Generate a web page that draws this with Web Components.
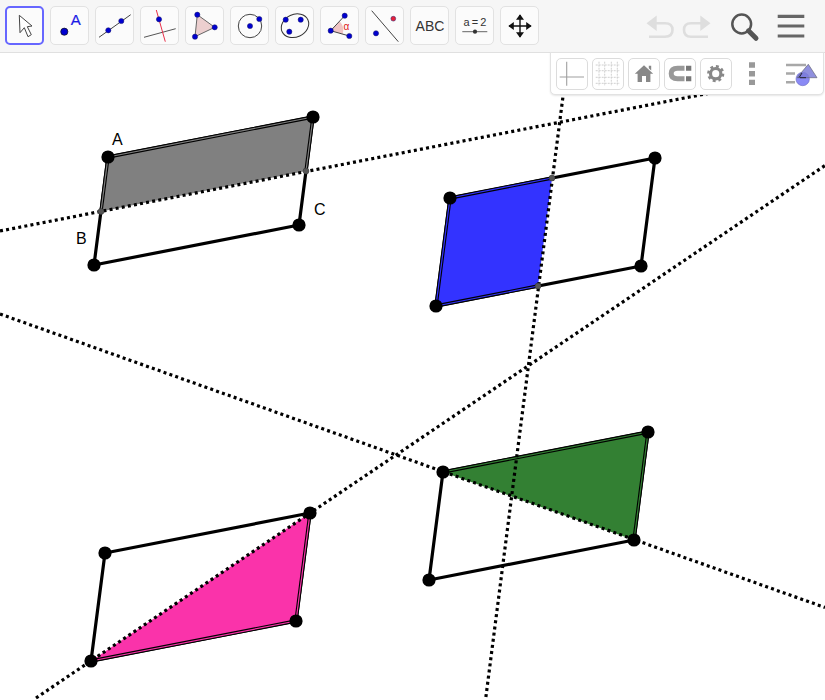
<!DOCTYPE html>
<html lang="en"><head><meta charset="utf-8"><title>GeoGebra</title>
<style>html,body{margin:0;padding:0;background:#fff}body{font-family:"Liberation Sans",Arial,sans-serif}</style></head>
<body><ggb-app></ggb-app>
<script>
const B='#0000d0';
const pt=(x,y,r=2.6,f=B)=>`<circle cx="${x}" cy="${y}" r="${r}" fill="${f}" stroke="#1a1a66" stroke-width=".5"/>`;
const TOOLS={
 move:`<path d="M14.3 9.3L15 26.7 19.3 21.7 23 30.7 26.3 28.7 22.3 20.7 27 20Z" fill="#fff" stroke="#444" stroke-width="1"/>`,
 point:`<circle cx="14.3" cy="25.7" r="3.6" fill="${B}" stroke="#111" stroke-width=".7"/><text x="25.7" y="19.3" text-anchor="middle" font-size="15" fill="#1a1ae6" stroke="#1a1ae6" stroke-width=".2">A</text>`,
 line:`<path d="M4 31.3L35.7 8.7" stroke="#444" stroke-width="1"/>${pt(13.3,24.3)}${pt(26.3,15)}`,
 perp:`<path d="M4 31.3L35.7 22.7" stroke="#555" stroke-width="1"/><path d="M16.3 4L25.3 35.7" stroke="#e8304a" stroke-width="1"/>${pt(19,13.3)}`,
 poly:`<path d="M12.3 8.7L29.7 21.3 10 30.7Z" fill="#eccfcf" stroke="#666" stroke-width="1"/>${pt(12.3,8.7)}${pt(29.7,21.3)}${pt(10,30.7)}`,
 circle:`<circle cx="20" cy="20" r="11.7" fill="none" stroke="#444" stroke-width="1"/>${pt(20,20)}${pt(29.3,13)}`,
 ellipse:`<ellipse cx="20" cy="19.7" rx="14.2" ry="11.3" transform="rotate(-25 20 19.7)" fill="none" stroke="#333" stroke-width="1"/>${pt(10.7,13.7)}${pt(25.7,13.7)}${pt(14.3,25.7)}`,
 angle:`<path d="M10.7 24.7L19.5 15.3A12.5 12.5 0 0 1 22.7 28Z" fill="#f0c4c4"/><path d="M24.7 9.7L10.7 24.7 29.3 30" fill="none" stroke="#444" stroke-width="1"/>${pt(24.7,9.7)}${pt(10.7,24.7)}${pt(29.3,30)}<text x="26.3" y="23.5" text-anchor="middle" font-size="10" fill="#e02020">α</text>`,
 reflect:`<path d="M6.7 4.7L33.3 35.7" stroke="#444" stroke-width="1"/>${pt(28.3,12.7,2.4,'#e8203a')}${pt(11,27.3)}`,
 text:`<text x="20" y="25" text-anchor="middle" font-size="14" fill="#333">ABC</text>`,
 slider:`<text x="20" y="19.5" text-anchor="middle" font-size="11" word-spacing="-1" fill="#333">a = 2</text><path d="M7.3 25.7H32.3" stroke="#666" stroke-width="1"/><circle cx="20" cy="25.7" r="2.1" fill="#333"/>`,
 pan:`<path d="M20 9V31M9 20H31" stroke="#111" stroke-width="1.4"/><path d="M20 8.3L16 13.8H24ZM20 31.7L16 26.2H24ZM8.3 20L13.8 16V24ZM31.7 20L26.2 16V24Z" fill="#111"/>`
};
class GgbTool extends HTMLElement{
 connectedCallback(){
  const s=this.shadowRoot||this.attachShadow({mode:'open'});
  s.innerHTML=`<style>:host{display:block;width:39px;height:39px;box-sizing:border-box;border:1px solid #e2e2e2;border-radius:5px;background:#fbfbfb;font-family:"Liberation Sans",Arial,sans-serif}
  :host([selected]){border:2px solid #6666ff;background:#fbfbfb}
  svg{display:block;width:39px;height:39px;margin:-1px}:host([selected]) svg{margin:-2px}</style>
  <svg viewBox="0 0 39 39">${TOOLS[this.getAttribute('icon')]}</svg>`;
 }
}
customElements.define('ggb-tool',GgbTool);
class GgbActions extends HTMLElement{
 constructor(){super();this.attachShadow({mode:'open'}).innerHTML=`<style>:host{display:block;width:165px;height:40px}svg{display:block}</style>
 <svg width="165" height="40" viewBox="644 6 165 40">
  <g fill="none" stroke="#dedede" stroke-width="2.6"><path d="M650 23.3H665Q672.5 23.3 672.5 30T665 36.8H649"/><path d="M708 23.3H691Q684 23.3 684 30T691 36.8H708"/></g>
  <path d="M646.5 23.3L656.7 15.5V31ZM710.5 23.3L700.3 15.5V31Z" fill="#dedede"/>
  <circle cx="741.7" cy="24" r="9.4" fill="none" stroke="#555" stroke-width="2.5"/>
  <path d="M748.5 30.8L756 38.3" stroke="#555" stroke-width="5" stroke-linecap="round"/>
  <path d="M777.7 16.3H804.3M777.7 26H804.3M777.7 36H804.3" stroke="#666" stroke-width="3.2"/>
 </svg>`;}
}
customElements.define('ggb-actions',GgbActions);
class GgbToolbar extends HTMLElement{
 constructor(){super();
  const icons=Object.keys(TOOLS);
  this.attachShadow({mode:'open'}).innerHTML=`<style>:host{display:flex;box-sizing:border-box;height:53px;padding:6px 16px 0 5px;background:#f6f6f6;border-bottom:1px solid #e0e0e0;gap:6px}
  ggb-actions{margin-left:auto}</style>
  ${icons.map((n,i)=>`<ggb-tool icon="${n}" ${i?'':'selected'}></ggb-tool>`).join('')}<ggb-actions></ggb-actions>`;
 }
}
customElements.define('ggb-toolbar',GgbToolbar);
const STYLE={
 axes:`<path d="M3.7 19H28M10.7 3.7V27.7" stroke="#a0a0a0" stroke-width="1.1"/>`,
 grid:`<path d="M7 3.7V28M12.7 3.7V28M19.3 3.7V28M25.3 3.7V28M3.7 7H28M3.7 12.7H28M3.7 19.3H28M3.7 25.3H28" stroke="#d0d0d0" stroke-width="1" stroke-dasharray="2 1"/>`,
 home:`<path d="M16 7.2L6.8 15.7H9.6V24H14V18H18V24H22.4V15.7H25.2ZM20.8 7.8H23.2V12.5L20.8 10.3Z" fill="#888"/>`,
 magnet:`<path d="M20.5 10.2H13.5Q7.2 10.2 7.2 15.5T13.5 20.8H20.5" fill="none" stroke="#999" stroke-width="5"/><path d="M22 7.7H27.3V12.7H22ZM22 18.3H27.3V23.3H22Z" fill="#777"/>`,
 gear:`<circle cx="15.7" cy="15.7" r="5.2" fill="none" stroke="#888" stroke-width="3.2"/><circle cx="15.7" cy="15.7" r="7.3" fill="none" stroke="#888" stroke-width="2.6" stroke-dasharray="2.9 2.83"/>`
};
class GgbStyleButton extends HTMLElement{
 connectedCallback(){
  const s=this.shadowRoot||this.attachShadow({mode:'open'});
  s.innerHTML=`<style>:host{display:block;width:32px;height:32px;box-sizing:border-box;border:1px solid #dcdcdc;border-radius:5px;background:#fff}svg{display:block;margin:-1px}</style>
  <svg width="32" height="32" viewBox="0 0 32 32">${STYLE[this.getAttribute('icon')]}</svg>`;
 }
}
customElements.define('ggb-style-button',GgbStyleButton);
class GgbStyleBar extends HTMLElement{
 constructor(){super();
  this.attachShadow({mode:'open'}).innerHTML=`<style>:host{position:absolute;left:550px;top:52px;width:274px;height:43px;box-sizing:border-box;display:flex;gap:4px;padding:5px 0 0 5px;background:#fff;border:1px solid #e2e2e2;border-radius:0 0 5px 5px;box-shadow:0 1px 2px rgba(0,0,0,.1)}
  svg{display:block;flex:none}</style>
  ${Object.keys(STYLE).map(n=>`<ggb-style-button icon="${n}"></ggb-style-button>`).join('')}
  <svg width="32" height="32" viewBox="0 0 32 32"><path d="M13 4.3h6v5.4h-6zM13 13h6v5.4h-6zM13 21.7h6v5.4h-6z" fill="#999"/></svg>
  <svg style="margin-left:13px" width="36" height="32" viewBox="0 0 36 32"><path d="M1 7H21M1 15.5H10M1 24.3H10" stroke="#a8a8a8" stroke-width="2.4"/><circle cx="17.7" cy="21" r="6.7" fill="#8a8af5" stroke="#6a6ac0" stroke-width=".6"/><path d="M23.3 6.3L32 19.7H12Z" fill="#7c7cd8" fill-opacity=".85" stroke="#667" stroke-width=".7"/><path d="M15 19.7H21M14 19.7L17 15" stroke="#223" stroke-width="1" fill="none"/></svg>`;
 }
}
customElements.define('ggb-style-bar',GgbStyleBar);
class GgbCanvas extends HTMLElement{
 constructor(){super();
  const para=(p)=>`<polygon points="${p.map(a=>a.join(',')).join(' ')}" fill="none" stroke="#000" stroke-width="3.2" stroke-linejoin="round"/>`;
  const filled=(pts,col,edges)=>{
    const s=pts.map(a=>a.join(',')).join(' ');
    return `<polygon points="${s}" fill="${col}"/>`+edges.map(([a,b])=>`<path d="M${a}L${b}" stroke="#000" stroke-width="3.4" fill="none"/><path d="M${a}L${b}" stroke="${col}" stroke-width="1.2" fill="none"/>`).join('');
  };
  const dots=(a,b)=>`<path d="M${a}L${b}" stroke="#000" stroke-width="3.2" stroke-dasharray="3 3.2" fill="none"/>`;
  const P=(pp)=>pp.map(([x,y])=>`<circle cx="${x}" cy="${y}" r="6.6" fill="#000"/>`).join('');
  const S=(pp)=>pp.map(([x,y])=>`<circle cx="${x}" cy="${y}" r="3" fill="#555" stroke="#333" stroke-width=".5"/>`).join('');
  const svg=`
  ${para([[108,157],[313,117],[299,225],[94,265]])}
  ${para([[450,198],[655,158],[641,266],[436,306]])}
  ${para([[443,472],[648,432],[634,540],[429,580]])}
  ${para([[105,553],[310,513],[296,621],[91,661]])}
  ${filled([[108,157],[313,117],[306,171],[101,211.4]],'#808080',[['108,157','313,117'],['313,117','306,171'],['108,157','101,211.4']])}
  ${filled([[450,198],[552,178],[538,286],[436,306]],'#3333ff',[['450,198','552,178'],['450,198','436,306'],['436,306','538,286']])}
  ${filled([[443,472],[648,432],[634,540]],'#338033',[['443,472','648,432'],['648,432','634,540']])}
  ${filled([[91,661],[310,513],[296,621]],'#fa33aa',[['91,661','296,621'],['310,513','296,621']])}
  ${dots('0,231','720,91.1')}
  ${dots('566,73','485.5,700')}
  ${dots('0,314','825,607.5')}
  ${dots('36,698','825,165.5')}
  ${S([[101,211.4],[306,171],[552,178],[538,286]])}
  ${P([[108,157],[313,117],[299,225],[94,265],[450,198],[655,158],[641,266],[436,306],[443,472],[648,432],[634,540],[429,580],[105,553],[310,513],[296,621],[91,661]])}
  <g font-size="16" fill="#000"><text x="112" y="144.5">A</text><text x="76" y="243.5">B</text><text x="314" y="214.5">C</text></g>`;
  this.attachShadow({mode:'open'}).innerHTML=`<style>:host{display:block;flex:1;min-height:0;overflow:hidden;background:#fff;font-family:"Liberation Sans",Arial,sans-serif}svg{display:block;margin-top:-53px}</style>
  <svg width="825" height="700" viewBox="0 0 825 700">${svg}</svg>`;
 }
}
customElements.define('ggb-canvas',GgbCanvas);
class GgbApp extends HTMLElement{
 constructor(){super();
  this.attachShadow({mode:'open'}).innerHTML=`<style>:host{display:flex;flex-direction:column;position:relative;width:825px;height:700px;overflow:hidden;font-family:"Liberation Sans",Arial,sans-serif}</style>
  <ggb-toolbar></ggb-toolbar><ggb-canvas></ggb-canvas><ggb-style-bar></ggb-style-bar>`;
 }
}
customElements.define('ggb-app',GgbApp);
</script></body></html>
